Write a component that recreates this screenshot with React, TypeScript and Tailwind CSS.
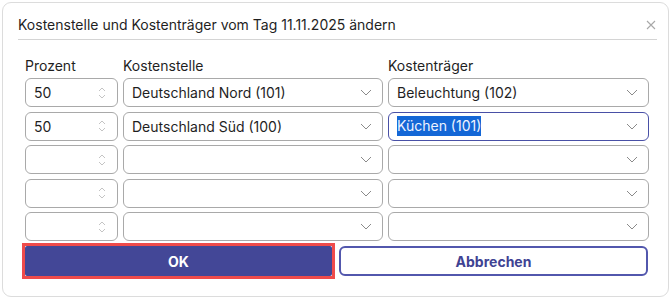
import React from 'react';

type Row = { percent: string; stelle: string; traeger: string; selected?: boolean };

const rows: Row[] = [
  { percent: '50', stelle: 'Deutschland Nord (101)', traeger: 'Beleuchtung (102)' },
  { percent: '50', stelle: 'Deutschland Süd (100)', traeger: 'Küchen (101)', selected: true },
  { percent: '', stelle: '', traeger: '' },
  { percent: '', stelle: '', traeger: '' },
  { percent: '', stelle: '', traeger: '' },
];

const Chevron: React.FC = () => (
  <svg width="12" height="7" viewBox="0 0 12 7" fill="none" className="shrink-0">
    <path d="M1 1l5 5 5-5" stroke="#8a8a8a" strokeWidth="1" />
  </svg>
);

const Spinner: React.FC = () => (
  <svg width="10" height="16" viewBox="0 0 10 16" fill="none" className="shrink-0">
    <path d="M2 6l3-3 3 3" stroke="#c4c4c4" strokeWidth="1" />
    <path d="M2 10l3 3 3-3" stroke="#c4c4c4" strokeWidth="1" />
  </svg>
);

const App: React.FC = () => {
  return (
    <div className="w-[670px] h-[299px] bg-white pl-[2px] pt-[2px] font-['Inter',sans-serif] text-[#1f1f1f]">
      <div className="w-[667px] h-[295px] rounded-[9px] border border-[#dcdcdc] bg-white">
        {/* header */}
        <div className="ml-[15px] mr-[11px] pt-[12px] pb-[4px] border-b border-[#d4d4d4] flex items-center justify-between">
          <h1 className="text-[14px] leading-[20px]">Kostenstelle und Kostenträger vom Tag 11.11.2025 ändern</h1>
          <svg width="10" height="10" viewBox="0 0 10 10" className="mr-[1px]">
            <path d="M1 1l8 8M9 1l-8 8" stroke="#a8a8a8" strokeWidth="1.1" />
          </svg>
        </div>

        {/* form */}
        <div className="pl-[22px] pr-[18px] pt-[16px]">
          <div className="flex gap-[5px] text-[14px] leading-[20px] mb-[2px]">
            <div className="w-[93px]">Prozent</div>
            <div className="w-[260px]">Kostenstelle</div>
            <div className="w-[261px]">Kostenträger</div>
          </div>

          <div className="flex flex-col gap-[4.5px]">
            {rows.map((r, i) => (
              <div key={i} className="flex gap-[5px] h-[29px] text-[14px]">
                <div className="w-[93px] rounded-[6px] border border-[#a9a9a9] flex items-center justify-between pl-[8px] pr-[10px]">
                  <span>{r.percent}</span>
                  <Spinner />
                </div>
                <div className="w-[260px] rounded-[6px] border border-[#a9a9a9] flex items-center justify-between pl-[8px] pr-[10px]">
                  <span>{r.stelle}</span>
                  <Chevron />
                </div>
                <div
                  className={
                    r.selected
                      ? 'w-[261px] rounded-[6px] border border-[#4950a6] flex items-center justify-between pl-[8px] pr-[10px]'
                      : 'w-[261px] rounded-[6px] border border-[#a9a9a9] flex items-center justify-between pl-[8px] pr-[10px]'
                  }
                >
                  {r.selected ? (
                    <span className="bg-[#1467d6] text-[#eef3ff] leading-[20px]">{r.traeger}</span>
                  ) : (
                    <span>{r.traeger}</span>
                  )}
                  <Chevron />
                </div>
              </div>
            ))}
          </div>

          {/* buttons */}
          <div className="flex gap-[4px] mt-[2px] text-[14px] font-bold items-center">
            <div className="w-[313px] border-[3px] border-[#ef4b4b] -ml-[3px] bg-white">
              <button className="w-full h-[30px] rounded-[2px] bg-[#434797] text-white">OK</button>
            </div>
            <button className="w-[309px] h-[30px] rounded-[6px] border-2 border-[#5257ad] text-[#3f4393]">
              Abbrechen
            </button>
          </div>
        </div>
      </div>
    </div>
  );
};

export default App;
